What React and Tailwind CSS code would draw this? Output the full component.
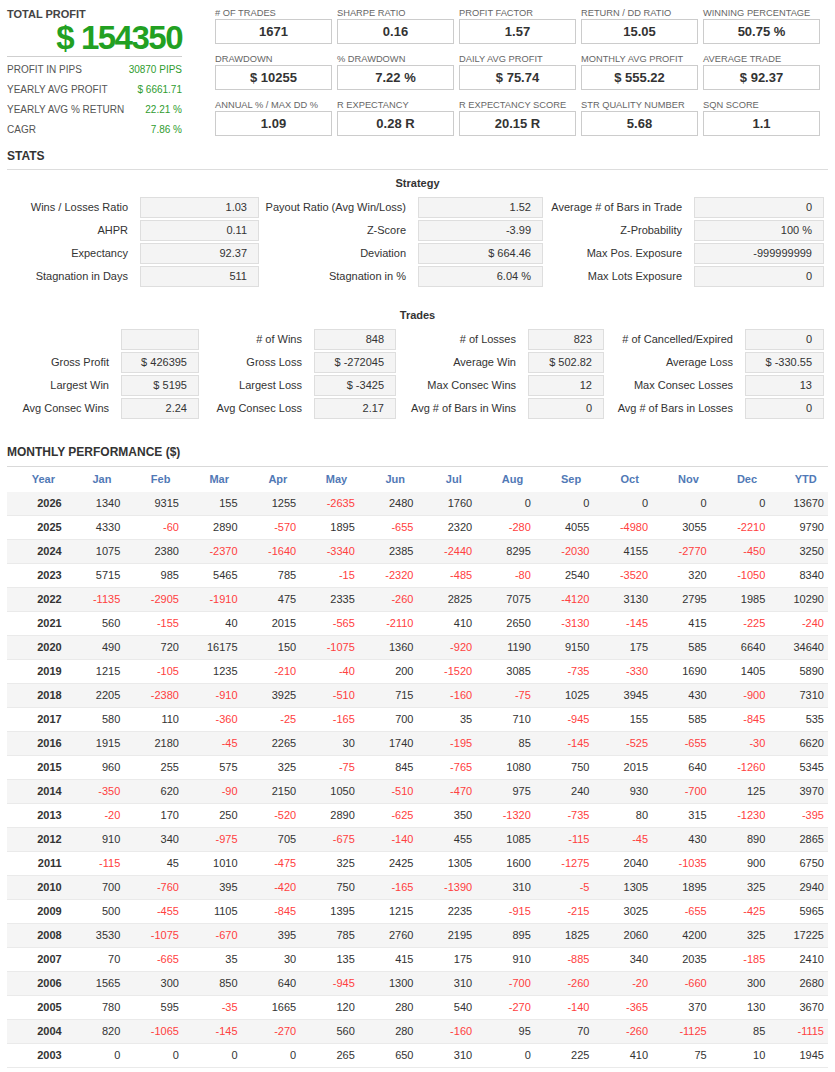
import React from "react";

const topBoxes = [
  [
    ["# OF TRADES", "1671"],
    ["SHARPE RATIO", "0.16"],
    ["PROFIT FACTOR", "1.57"],
    ["RETURN / DD RATIO", "15.05"],
    ["WINNING PERCENTAGE", "50.75 %"],
  ],
  [
    ["DRAWDOWN", "$ 10255"],
    ["% DRAWDOWN", "7.22 %"],
    ["DAILY AVG PROFIT", "$ 75.74"],
    ["MONTHLY AVG PROFIT", "$ 555.22"],
    ["AVERAGE TRADE", "$ 92.37"],
  ],
  [
    ["ANNUAL % / MAX DD %", "1.09"],
    ["R EXPECTANCY", "0.28 R"],
    ["R EXPECTANCY SCORE", "20.15 R"],
    ["STR QUALITY NUMBER", "5.68"],
    ["SQN SCORE", "1.1"],
  ],
];

const leftRows = [
  ["PROFIT IN PIPS", "30870 PIPS"],
  ["YEARLY AVG PROFIT", "$ 6661.71"],
  ["YEARLY AVG % RETURN", "22.21 %"],
  ["CAGR", "7.86 %"],
];

const strategy = [
  ["Wins / Losses Ratio", "1.03", "Payout Ratio (Avg Win/Loss)", "1.52", "Average # of Bars in Trade", "0"],
  ["AHPR", "0.11", "Z-Score", "-3.99", "Z-Probability", "100 %"],
  ["Expectancy", "92.37", "Deviation", "$ 664.46", "Max Pos. Exposure", "-999999999"],
  ["Stagnation in Days", "511", "Stagnation in %", "6.04 %", "Max Lots Exposure", "0"],
];

const trades = [
  ["", "", "# of Wins", "848", "# of Losses", "823", "# of Cancelled/Expired", "0"],
  ["Gross Profit", "$ 426395", "Gross Loss", "$ -272045", "Average Win", "$ 502.82", "Average Loss", "$ -330.55"],
  ["Largest Win", "$ 5195", "Largest Loss", "$ -3425", "Max Consec Wins", "12", "Max Consec Losses", "13"],
  ["Avg Consec Wins", "2.24", "Avg Consec Loss", "2.17", "Avg # of Bars in Wins", "0", "Avg # of Bars in Losses", "0"],
];

const months = ["Year", "Jan", "Feb", "Mar", "Apr", "May", "Jun", "Jul", "Aug", "Sep", "Oct", "Nov", "Dec", "YTD"];

const monthly = [
  [2026, 1340, 9315, 155, 1255, -2635, 2480, 1760, 0, 0, 0, 0, 0, 13670],
  [2025, 4330, -60, 2890, -570, 1895, -655, 2320, -280, 4055, -4980, 3055, -2210, 9790],
  [2024, 1075, 2380, -2370, -1640, -3340, 2385, -2440, 8295, -2030, 4155, -2770, -450, 3250],
  [2023, 5715, 985, 5465, 785, -15, -2320, -485, -80, 2540, -3520, 320, -1050, 8340],
  [2022, -1135, -2905, -1910, 475, 2335, -260, 2825, 7075, -4120, 3130, 2795, 1985, 10290],
  [2021, 560, -155, 40, 2015, -565, -2110, 410, 2650, -3130, -145, 415, -225, -240],
  [2020, 490, 720, 16175, 150, -1075, 1360, -920, 1190, 9150, 175, 585, 6640, 34640],
  [2019, 1215, -105, 1235, -210, -40, 200, -1520, 3085, -735, -330, 1690, 1405, 5890],
  [2018, 2205, -2380, -910, 3925, -510, 715, -160, -75, 1025, 3945, 430, -900, 7310],
  [2017, 580, 110, -360, -25, -165, 700, 35, 710, -945, 155, 585, -845, 535],
  [2016, 1915, 2180, -45, 2265, 30, 1740, -195, 85, -145, -525, -655, -30, 6620],
  [2015, 960, 255, 575, 325, -75, 845, -765, 1080, 750, 2015, 640, -1260, 5345],
  [2014, -350, 620, -90, 2150, 1050, -510, -470, 975, 240, 930, -700, 125, 3970],
  [2013, -20, 170, 250, -520, 2890, -625, 350, -1320, -735, 80, 315, -1230, -395],
  [2012, 910, 340, -975, 705, -675, -140, 455, 1085, -115, -45, 430, 890, 2865],
  [2011, -115, 45, 1010, -475, 325, 2425, 1305, 1600, -1275, 2040, -1035, 900, 6750],
  [2010, 700, -760, 395, -420, 750, -165, -1390, 310, -5, 1305, 1895, 325, 2940],
  [2009, 500, -455, 1105, -845, 1395, 1215, 2235, -915, -215, 3025, -655, -425, 5965],
  [2008, 3530, -1075, -670, 395, 785, 2760, 2195, 895, 1825, 2060, 4200, 325, 17225],
  [2007, 70, -665, 35, 30, 135, 415, 175, 910, -885, 340, 2035, -185, 2410],
  [2006, 1565, 300, 850, 640, -945, 1300, 310, -700, -260, -20, -660, 300, 2680],
  [2005, 780, 595, -35, 1665, 120, 280, 540, -270, -140, -365, 370, 130, 3670],
  [2004, 820, -1065, -145, -270, 560, 280, -160, 95, 70, -260, -1125, 85, -1115],
  [2003, 0, 0, 0, 0, 265, 650, 310, 0, 225, 410, 75, 10, 1945],
];

function StatGrid({ rows, cols }) {
  return (
    <div className={`grid ${cols} gap-y-[2px]`}>
      {rows.map((r, ri) =>
        r.map((c, ci) =>
          ci % 2 === 0 ? (
            <div key={`${ri}-${ci}`} className="h-[21px] leading-[21px] text-right pr-[12px] text-[11px] text-[#333] whitespace-nowrap">
              {c}
            </div>
          ) : (
            <div
              key={`${ri}-${ci}`}
              className="h-[21px] leading-[19px] text-right pr-[11px] text-[11px] text-[#333] bg-[#f4f4f4] border border-[#dedede]"
            >
              {c}
            </div>
          )
        )
      )}
    </div>
  );
}

export default function App() {
  return (
    <div className="w-[835px] bg-white pt-[8px] px-[7px] font-['Liberation_Sans',Arial,sans-serif] text-[#333]">
      {/* Top section */}
      <div className="flex">
        <div className="w-[175px]">
          <div className="text-[11px] leading-[13px] font-bold text-[#444]">TOTAL PROFIT</div>
          <div className="h-[33px] leading-[33px] text-right text-[33px] font-bold tracking-[-1.5px] text-[#22a022]">
            $ 154350
          </div>
          <div className="mt-[2px] border-t border-[#cfcfcf]" />
          <div className="pt-[3px]">
            {leftRows.map(([l, v]) => (
              <div key={l} className="flex justify-between h-[20px] leading-[20px] text-[10px]">
                <span className="text-[#555]">{l}</span>
                <span className="text-[#2f9c2f]">{v}</span>
              </div>
            ))}
          </div>
        </div>
        <div className="ml-[33px] flex flex-col gap-[10px]">
          {topBoxes.map((row, ri) => (
            <div key={ri} className="flex gap-[5px]">
              {row.map(([l, v]) => (
                <div key={l} className="w-[117px]">
                  <div className="h-[11px] leading-[11px] text-[9.3px] text-[#666] whitespace-nowrap">{l}</div>
                  <div className="h-[25px] border border-[#cccccc] bg-white flex items-center justify-center text-[13px] font-bold text-[#333]">
                    {v}
                  </div>
                </div>
              ))}
            </div>
          ))}
        </div>
      </div>

      {/* STATS */}
      <div className="mt-[9px] text-[12px] leading-[14px] font-bold text-[#333] pb-[6px] border-b border-[#dddddd]">STATS</div>

      <div className="mt-[7px] text-center text-[11px] leading-[13px] font-bold text-[#333]">Strategy</div>
      <div className="mt-[7px]">
        <StatGrid rows={strategy} cols="grid-cols-[133px_119px_159px_125px_151px_130px]" />
      </div>

      <div className="mt-[22px] text-center text-[11px] leading-[13px] font-bold text-[#333]">Trades</div>
      <div className="mt-[7px]">
        <StatGrid rows={trades} cols="grid-cols-[114px_78px_115px_82px_132px_76px_141px_79px]" />
      </div>

      {/* Monthly */}
      <div className="mt-[26px] text-[12px] leading-[14px] font-bold text-[#333] pb-[7px] border-b border-[#d9d9d9]">
        MONTHLY PERFORMANCE ($)
      </div>
      <div className="grid grid-cols-[repeat(14,minmax(0,1fr))] h-[25px] items-center">
        {months.map((m) => (
          <div key={m} className="text-center pl-[18px] pr-[4px] text-[11px] font-bold text-[#5179b6]">
            {m}
          </div>
        ))}
      </div>
      {monthly.map((row, ri) => (
        <div
          key={row[0]}
          className={`grid grid-cols-[repeat(14,minmax(0,1fr))] h-[24px] items-center border-b border-[#eaeaea] ${
            ri % 2 === 0 ? "bg-[#f5f5f5]" : "bg-white"
          }`}
        >
          {row.map((v, ci) => (
            <div
              key={ci}
              className={`text-right pr-[4px] text-[11px] ${
                ci === 0 ? "font-bold text-[#333]" : v < 0 ? "text-[#ff4040]" : "text-[#333]"
              }`}
            >
              {v}
            </div>
          ))}
        </div>
      ))}
    </div>
  );
}
